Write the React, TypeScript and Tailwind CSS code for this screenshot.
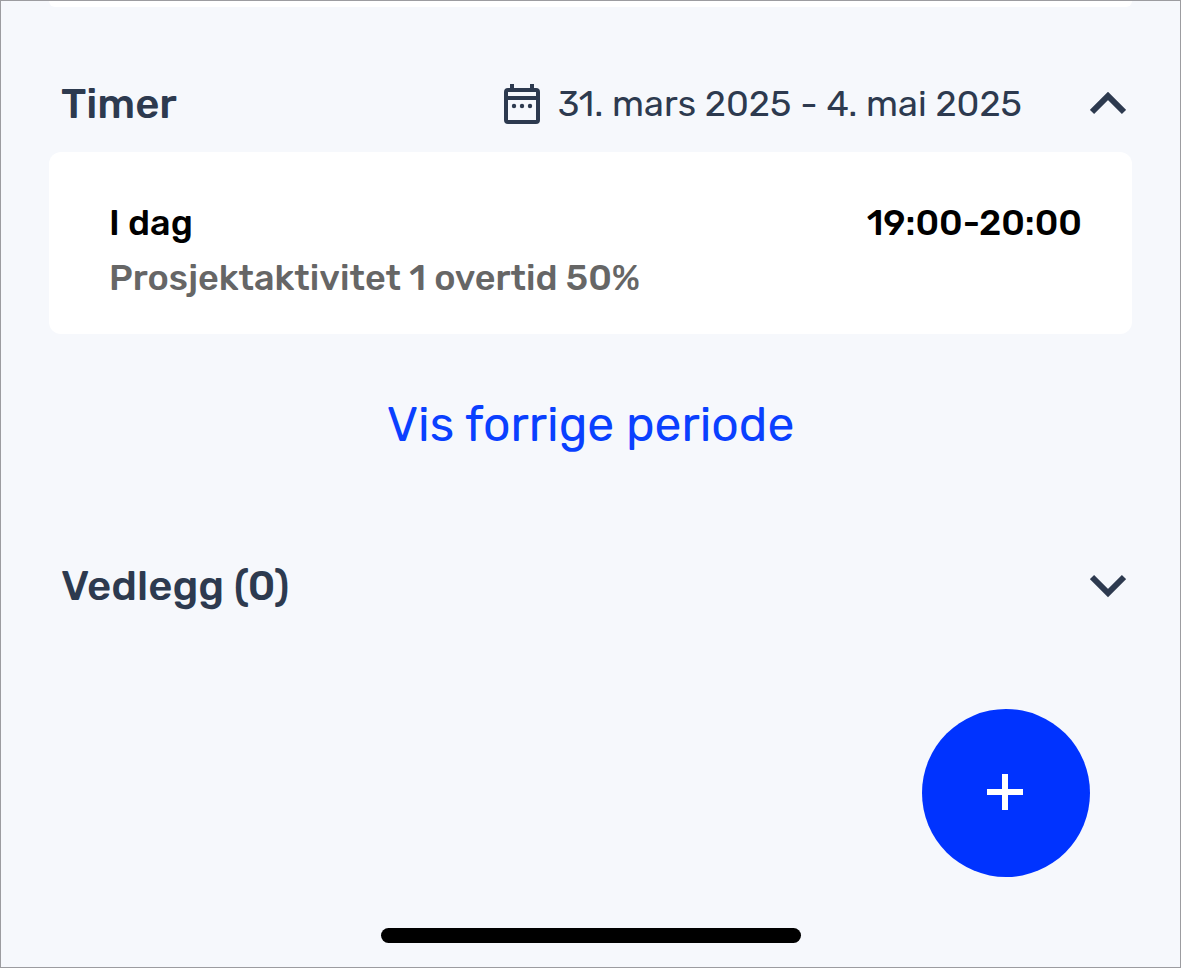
import React from 'react';

type ChevronProps = {
    up?: boolean;
};

const Chevron: React.FC<ChevronProps> = ({ up = false }) => {
    return (
        <svg viewBox="0 0 36 24" className="w-9 h-6" fill="none" stroke="currentColor" strokeWidth="6" aria-hidden="true">
            <path d={up ? 'M2 20 18 4 34 20' : 'M2 3 18 19 34 3'} />
        </svg>
    );
};

const CalendarIcon: React.FC = () => {
    return (
        <svg viewBox="0 0 36 40" className="w-9 h-10" fill="none" stroke="currentColor" strokeWidth="4" aria-hidden="true">
            <rect x="2" y="6" width="32" height="32" rx="2" />
            <path d="M2 14H34M8 0V6M28 0V6" />
            <g fill="currentColor" stroke="none">
                <circle cx="10" cy="22" r="2.2" />
                <circle cx="18" cy="22" r="2.2" />
                <circle cx="26" cy="22" r="2.2" />
            </g>
        </svg>
    );
};

const App: React.FC = () => {
    return (
        <main className="min-h-screen flex flex-col bg-[#f6f8fc] border border-[#9c9ca0] px-12 font-['Rubik','Roboto',sans-serif] text-[#2d3a4f]">
            <div className="h-[6px] bg-white rounded-b-xl" />

            <section className="mt-14">
                <header className="h-[82px] mb-[7px] flex items-center pl-3 pr-[6px]">
                    <h2 className="text-[42px] font-medium">Timer</h2>
                    <button type="button" className="ml-auto flex items-center gap-[18px] text-[36px]">
                        <CalendarIcon />
                        <span className="whitespace-nowrap">31. mars 2025 - 4. mai 2025</span>
                    </button>
                    <button type="button" aria-label="Skjul timer" className="ml-[68px]">
                        <Chevron up />
                    </button>
                </header>

                <article className="bg-white rounded-xl pl-[60px] pr-[50px] pt-[43px] pb-[29px] text-[36px] leading-[55px] font-medium">
                    <div className="flex justify-between text-black">
                        <h3>I dag</h3>
                        <p>19:00-20:00</p>
                    </div>
                    <p className="text-[#666666]">Prosjektaktivitet 1 overtid 50%</p>
                </article>

                <div className="mt-14 flex justify-center">
                    <button type="button" className="text-[48px] leading-[70px] text-[#0a40ff]">Vis forrige periode</button>
                </div>
            </section>

            <section className="mt-20">
                <header className="h-[92px] flex items-center justify-between pl-3 pr-[6px]">
                    <h2 className="text-[42px] font-medium">Vedlegg (0)</h2>
                    <button type="button" aria-label="Vis vedlegg">
                        <Chevron />
                    </button>
                </header>
            </section>

            <div className="mt-auto flex justify-end pr-[42px]">
                <button type="button" aria-label="Legg til" className="size-[168px] rounded-full bg-[#0033ff] text-white flex items-center justify-center pb-[2px] pr-[2px]">
                    <svg viewBox="0 0 36 36" className="size-9" fill="none" stroke="currentColor" strokeWidth="6" aria-hidden="true">
                        <path d="M0 18H36M18 0V36" />
                    </svg>
                </button>
            </div>

            <div className="mt-[51px] mb-6 mx-auto w-[420px] h-[15px] rounded-full bg-black" />
        </main>
    );
};

export default App;
